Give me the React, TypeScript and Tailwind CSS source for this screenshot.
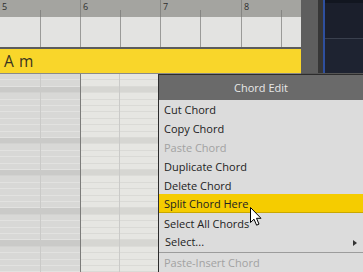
import React from 'react';

const ticks = [
  { w: 'w-[40px]', major: false, label: '5', first: true },
  { w: 'w-[40px]', major: false, label: '' },
  { w: 'w-[40px]', major: true, label: '6' },
  { w: 'w-[40px]', major: false, label: '' },
  { w: 'w-[40px]', major: true, label: '7' },
  { w: 'w-[41px]', major: false, label: '' },
  { w: 'w-[40px]', major: true, label: '8' },
  { w: 'w-[20px]', major: false, label: '' },
];

const rows = Array.from({ length: 31 }, (_, i) => Math.round((i + 1) * 6.4) - Math.round(i * 6.4));
const darkRows = [2, 10, 15, 21, 26];

const items = [
  { label: 'Cut Chord' },
  { label: 'Copy Chord' },
  { label: 'Paste Chord', disabled: true },
  { label: 'Duplicate Chord' },
  { label: 'Delete Chord' },
  { label: 'Split Chord Here', active: true },
  { label: 'Select All Chords' },
  { label: 'Select...', sub: true },
];

function Lane({ side, divider }: { side: 'left' | 'right'; divider?: boolean }) {
  return (
    <div className={`flex-1 flex flex-col ${divider ? 'border-l border-[#cacac8]' : ''}`}>
      {rows.map((h, i) => {
        const dark = darkRows.includes(i);
        const bg =
          side === 'left'
            ? dark
              ? 'bg-[#cacac8] border-[#d2d2d0]'
              : 'bg-[#d8d8d6] border-[#e2e2e0]'
            : dark
              ? 'bg-[#d6d6d2] border-[#dcdcd8]'
              : 'bg-[#e6e6e2] border-[#dadad6]';
        return <div key={i} className={`${h === 7 ? 'h-[7px]' : 'h-[6px]'} border-b ${bg}`} />;
      })}
    </div>
  );
}

export default function App() {
  return (
    <div className="w-[363px] h-[272px] overflow-hidden bg-[#dcdcdc] relative" style={{ fontFamily: '"Open Sans", sans-serif' }}>
      {/* top: ruler + chord track */}
      <div className="flex h-[74px]">
        <div className="w-[301px] flex flex-col">
          <div className="flex">
            {ticks.map((t, i) => (
              <div key={i} className={`${t.w} flex flex-col`}>
                <div className={`h-[10px] bg-[#a4a4a0] ${t.major ? 'border-l border-[#858582]' : ''}`}>
                  {t.label && (
                    <span className="block pl-[2px] text-[9px] leading-[9px] pt-[2px] text-[#2e2e2e]">{t.label}</span>
                  )}
                </div>
                <div className={`h-[7px] bg-[#a4a4a0] ${t.first ? '' : 'border-l border-[#858582]'}`} />
                <div className={`h-[30px] bg-[#e3e3e1] ${t.first ? '' : 'border-l border-[#9a9a98]'}`} />
              </div>
            ))}
          </div>
          <div className="h-[2px] bg-[#5c5c5c]" />
          <div className="h-[24px] bg-[#f9d62a] flex items-center pl-[4px] pt-px text-[15.5px] text-[#3b3420] tracking-[0.6px]">
            A m
          </div>
          <div className="h-px bg-[#8a8a88]" />
        </div>
        <div className="flex-1 flex flex-col">
          <div className="flex-1 flex">
            <div className="w-[17px] bg-[#5e5e5e]" />
            <div className="w-[5px] bg-[#363636]" />
            <div className="w-[2px] bg-[#2e4f9e]" />
            <div className="flex-1 flex flex-col bg-[#1d2230]">
              <div className="h-[3px] bg-[#121620]" />
              <div className="h-[35px] bg-[#1b1f2c]" />
              <div className="h-px bg-[#3a404e]" />
              <div className="flex-1 bg-[#1e2331]" />
            </div>
          </div>
          <div className="h-px bg-[#555555]" />
        </div>
      </div>

      {/* bottom: piano roll + context menu */}
      <div className="flex h-[198px]">
        <div className="w-[80px] flex">
          <Lane side="left" />
          <Lane side="left" divider />
        </div>
        <div className="w-px bg-[#7c7c7a]" />
        <div className="w-[77px] flex">
          <Lane side="right" />
          <Lane side="right" divider />
        </div>

        <div className="flex-1 flex flex-col bg-[#dcdcdc] border-l border-t border-[#2c2c2c] text-[11px]">
          <div className="h-[25px] pt-[2px] bg-[#6a6a6a] flex items-center justify-center text-[#e8e8e8]">Chord Edit</div>
          {items.map((it) => (
            <div
              key={it.label}
              className={`h-[19px] pt-[2px] flex items-center justify-between ${it.label === 'Select...' ? 'pl-[6px]' : 'pl-[5px]'} pr-[6px] ${
                it.active ? 'bg-[#f5cc00] border-b border-[#c9a800]' : ''
              } ${it.disabled ? 'text-[#a2a2a2]' : 'text-[#222222]'}`}
            >
              <span>{it.label}</span>
              {it.sub && (
                <span className="w-0 h-0 border-y-[3.5px] border-y-transparent border-l-[4px] border-l-[#333333]" />
              )}
            </div>
          ))}
          <div className="mt-px h-px bg-[#9c9c9c]" />
          <div className="h-[19px] pt-[2px] flex items-center pl-[5px] text-[#a2a2a2]">Paste-Insert Chord</div>
        </div>
      </div>

      {/* mouse pointer */}
      <svg className="absolute left-[250px] top-[207px]" width="13" height="20" viewBox="0 0 13 20">
        <path
          d="M0.5 0.5 L0.5 15.5 L4 12.2 L6.6 18.2 L9 17.1 L6.5 11.3 L11 11.3 Z"
          fill="#ffffff"
          stroke="#000000"
          strokeWidth="1"
          strokeLinejoin="miter"
        />
      </svg>
    </div>
  );
}
